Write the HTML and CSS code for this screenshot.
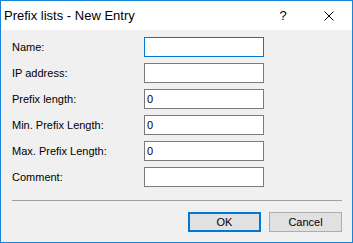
FILE: index.html
```html
<!DOCTYPE html>
<html lang="en">
<head>
    <meta charset="UTF-8">
    <title>Prefix lists - New Entry</title>
    <link rel="stylesheet" href="styles.css">
</head>
<body>
    <div class="window">
        <div class="titlebar">
            <div class="title">Prefix lists - New Entry</div>
            <div class="caption-btn help">?</div>
            <div class="caption-btn close">
                <svg width="10" height="10" viewBox="0 0 10 10">
                    <path d="M0.5 0.5 L9.5 9.5 M9.5 0.5 L0.5 9.5" stroke="#000" stroke-width="1" fill="none"/>
                </svg>
            </div>
        </div>

        <div class="content">
            <div class="fields">
                <label for="name">Name:</label>
                <input type="text" id="name" class="focused">
                <label for="ip">IP address:</label>
                <input type="text" id="ip">
                <label for="plen">Prefix length:</label>
                <input type="text" id="plen" value="0">
                <label for="pmin">Min. Prefix Length:</label>
                <input type="text" id="pmin" value="0">
                <label for="pmax">Max. Prefix Length:</label>
                <input type="text" id="pmax" value="0">
                <label for="comment">Comment:</label>
                <input type="text" id="comment">
            </div>

            <div class="separator"></div>

            <div class="buttons">
                <button class="default">OK</button>
                <button>Cancel</button>
            </div>
        </div>
    </div>
</body>
</html>
```

FILE: styles.css
```css
html, body {
    margin: 0;
    padding: 0;
}
body {
    background: #f0f0f0;
    font-family: "Liberation Sans", Arial, sans-serif;
    font-size: 11px;
    color: #000;
}
.window {
    width: 353px;
    height: 243px;
    box-sizing: border-box;
    border: 1px solid #1883d7;
    display: flex;
    flex-direction: column;
    background: #f0f0f0;
}
.titlebar {
    height: 29px;
    background: #fff;
    display: flex;
    align-items: center;
}
.title {
    flex: 1;
    padding-left: 3px;
    font-size: 13px;
}
.caption-btn {
    width: 46px;
    height: 29px;
    display: flex;
    align-items: center;
    justify-content: center;
    font-size: 13px;
}
.content {
    padding: 7px 10px 0 11px;
}
.fields {
    display: grid;
    grid-template-columns: 132px 120px;
    row-gap: 6px;
    align-items: center;
}
.fields input {
    width: 120px;
    height: 20px;
    box-sizing: border-box;
    margin: 0;
    border: 1px solid #7a7a7a;
    padding: 0 2px;
    font-family: inherit;
    font-size: 11px;
    background: #fff;
    outline: none;
}
.fields input.focused {
    border-color: #0078d7;
}
.separator {
    margin-top: 13px;
    height: 1px;
    width: 330px;
    background: #a0a0a0;
}
.buttons {
    margin-top: 11px;
    width: 330px;
    display: flex;
    justify-content: flex-end;
    gap: 8px;
}
button {
    width: 73px;
    height: 20px;
    box-sizing: border-box;
    background: #e1e1e1;
    border: 1px solid #adadad;
    font-family: inherit;
    font-size: 11px;
    padding: 0;
    color: #000;
}
button.default {
    border: 2px solid #0078d7;
}
```
